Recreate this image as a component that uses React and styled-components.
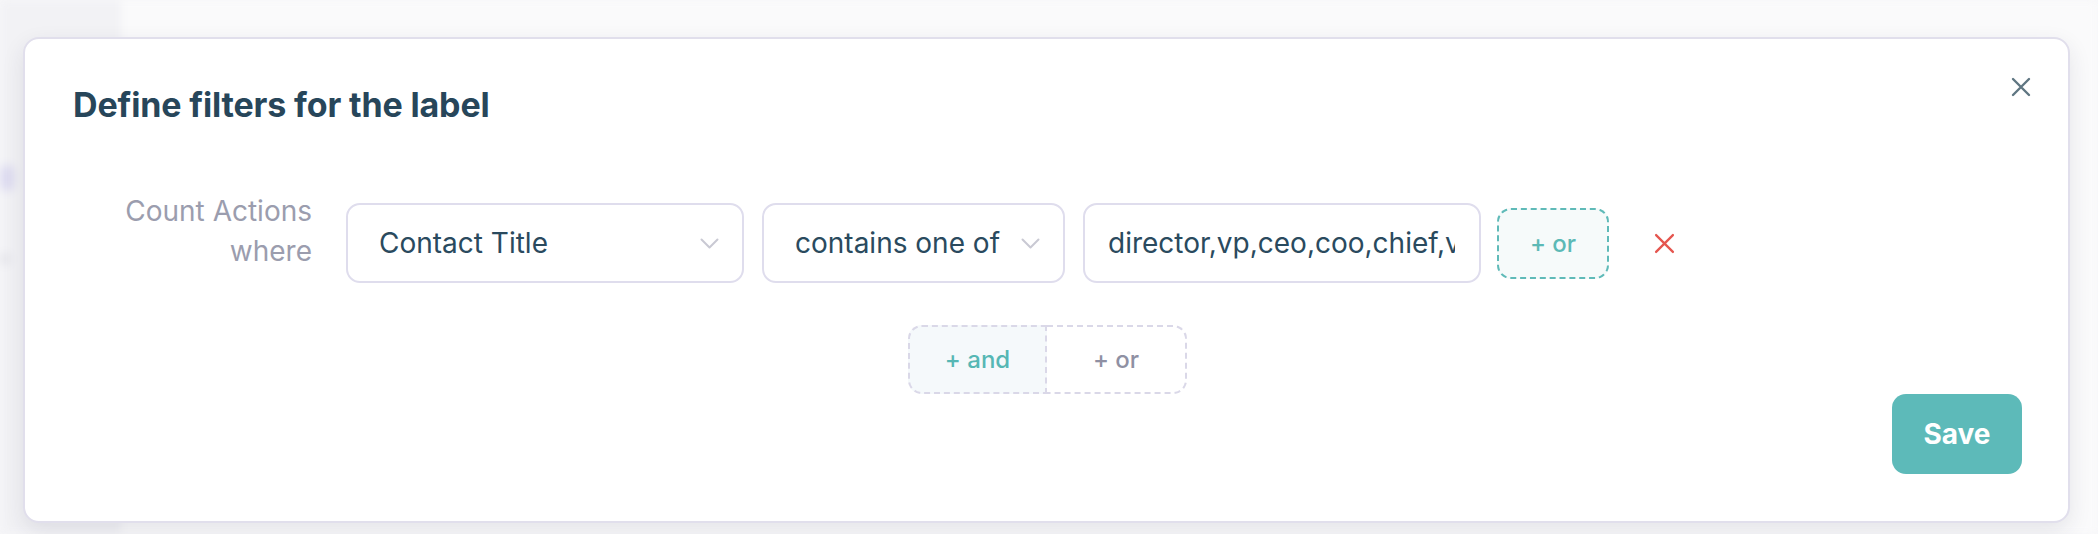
import React from 'react';
import styled, { createGlobalStyle } from 'styled-components';

const GlobalStyle = createGlobalStyle`
  html, body { margin: 0; padding: 0; }
  body {
    width: 2098px;
    height: 534px;
    overflow: hidden;
    background: #f7f7f9;
    font-family: Inter, "Noto Sans", sans-serif;
    -webkit-font-smoothing: antialiased;
  }
  * { box-sizing: border-box; }
`;

const Stage = styled.div`
  position: relative;
  width: 2098px;
  height: 534px;
  overflow: hidden;
  background: #f7f7f9;
`;

const Backdrop = styled.div`
  display: flex;
  height: 100%;
  filter: blur(5px);
`;

const BackSidebar = styled.div`
  width: 118px;
  background: #f2f2f5;
  display: flex;
  flex-direction: column;
  padding: 165px 0 0 0;
  gap: 62px;
`;

const BackItem = styled.div`
  width: ${(p) => p.$w}px;
  height: ${(p) => p.$h}px;
  background: ${(p) => p.$c};
  border-radius: 6px;
`;

const BackMain = styled.div`
  flex: 1;
  background: #fafafb;
  border-left: 2px solid #ececf1;
`;

const Modal = styled.div`
  position: absolute;
  left: 23px;
  top: 37px;
  width: 2047px;
  background: #ffffff;
  border: 2px solid #e1dfec;
  border-radius: 16px;
  box-shadow: 0 8px 22px rgba(40, 40, 70, 0.1);
  padding: 45px 46px 47px 48px;
  display: flex;
  flex-direction: column;
`;

const Header = styled.div`
  display: flex;
  align-items: flex-start;
`;

const Title = styled.h2`
  flex: 1;
  margin: 0;
  font-size: 34px;
  line-height: 42px;
  font-weight: 700;
  color: #27465a;
  letter-spacing: -0.15px;
`;

const CloseButton = styled.button`
  margin: -7px -9px 0 0;
  width: 20px;
  height: 20px;
  padding: 0;
  border: none;
  background: none;
  display: flex;
  align-items: center;
  justify-content: center;
  cursor: pointer;
`;

const FilterRow = styled.div`
  margin-top: 77px;
  display: flex;
  align-items: center;
`;

const WhereLabel = styled.div`
  width: 239px;
  margin: -12px 34px 0 0;
  align-self: flex-start;
  text-align: right;
  font-size: 28px;
  line-height: 40px;
  color: #9b9dae;
`;

const Select = styled.div`
  width: ${(p) => p.$w}px;
  height: 80px;
  margin-right: 18px;
  border: 2px solid #dfdded;
  border-radius: 14px;
  padding: 0 23px 0 31px;
  display: flex;
  align-items: center;
  justify-content: space-between;
  font-size: 28px;
  color: #2a4a5e;
  background: #fff;
  white-space: nowrap;
`;

const ValueInput = styled.input`
  width: 398px;
  height: 80px;
  border: 2px solid #dfdded;
  border-radius: 14px;
  padding: 0 24px 0 23px;
  font-family: Inter, "Noto Sans", sans-serif;
  font-size: 28px;
  color: #2a4a5e;
  background: #fff;
  outline: none;
`;

const OrChip = styled.button`
  margin-left: 16px;
  width: 112px;
  height: 71px;
  border: 2px dashed #5fbab8;
  border-radius: 14px;
  background: #f6fafa;
  color: #5cb9b6;
  font-family: Inter, "Noto Sans", sans-serif;
  font-size: 24px;
  font-weight: 500;
  cursor: pointer;
`;

const RemoveButton = styled.button`
  margin-left: 44px;
  width: 23px;
  height: 23px;
  padding: 0;
  border: none;
  background: none;
  display: flex;
  align-items: center;
  justify-content: center;
  cursor: pointer;
`;

const GroupRow = styled.div`
  margin-top: 42px;
  display: flex;
  justify-content: center;
`;

const Group = styled.div`
  display: flex;
`;

const GroupButton = styled.button`
  width: ${(p) => p.$w}px;
  height: 69px;
  border: 2px dashed #dad8e8;
  border-left-width: ${(p) => (p.$first ? '2px' : '0')};
  border-radius: ${(p) => (p.$first ? '14px 0 0 14px' : '0 14px 14px 0')};
  background: ${(p) => (p.$active ? '#f5f9fb' : '#ffffff')};
  color: ${(p) => (p.$active ? '#56b7b4' : '#8f90a3')};
  font-family: Inter, "Noto Sans", sans-serif;
  font-size: 24px;
  font-weight: 500;
  cursor: pointer;
`;

const Footer = styled.div`
  display: flex;
  justify-content: flex-end;
`;

const SaveButton = styled.button`
  width: 130px;
  height: 80px;
  border: none;
  border-radius: 14px;
  background: #5dbab9;
  color: #ffffff;
  font-family: Inter, "Noto Sans", sans-serif;
  font-size: 28px;
  font-weight: 700;
  cursor: pointer;
`;

const Chevron = () => (
  <svg width="19" height="11" viewBox="0 0 19 11" fill="none">
    <path d="M1.5 1.5 L9.5 9.5 L17.5 1.5" stroke="#c9c9d3" strokeWidth="2" strokeLinecap="round" strokeLinejoin="round" />
  </svg>
);

const Cross = ({ size, color, width }) => (
  <svg width={size} height={size} viewBox="0 0 20 20" fill="none">
    <path d="M2 2 L18 18 M18 2 L2 18" stroke={color} strokeWidth={width} strokeLinecap="round" />
  </svg>
);

export default function App() {
  return (
    <Stage>
      <GlobalStyle />
      <Backdrop>
        <BackSidebar>
          <BackItem $w={14} $h={26} $c="#dcdaf0" />
          <BackItem $w={10} $h={12} $c="#e2e2e8" />
        </BackSidebar>
        <BackMain />
      </Backdrop>
      <Modal>
        <Header>
          <Title>Define filters for the label</Title>
          <CloseButton aria-label="Close">
            <Cross size={20} color="#5f7682" width={2.4} />
          </CloseButton>
        </Header>
        <FilterRow>
          <WhereLabel>
            Count Actions
            <br />
            where
          </WhereLabel>
          <Select $w={398}>
            <span>Contact Title</span>
            <Chevron />
          </Select>
          <Select $w={303}>
            <span>contains one of</span>
            <Chevron />
          </Select>
          <ValueInput readOnly value="director,vp,ceo,coo,chief,vice president" />
          <OrChip>+ or</OrChip>
          <RemoveButton aria-label="Remove">
            <Cross size={21} color="#e5564f" width={2.2} />
          </RemoveButton>
        </FilterRow>
        <GroupRow>
          <Group>
            <GroupButton $w={139} $first $active>+ and</GroupButton>
            <GroupButton $w={140}>+ or</GroupButton>
          </Group>
        </GroupRow>
        <Footer>
          <SaveButton>Save</SaveButton>
        </Footer>
      </Modal>
    </Stage>
  );
}
